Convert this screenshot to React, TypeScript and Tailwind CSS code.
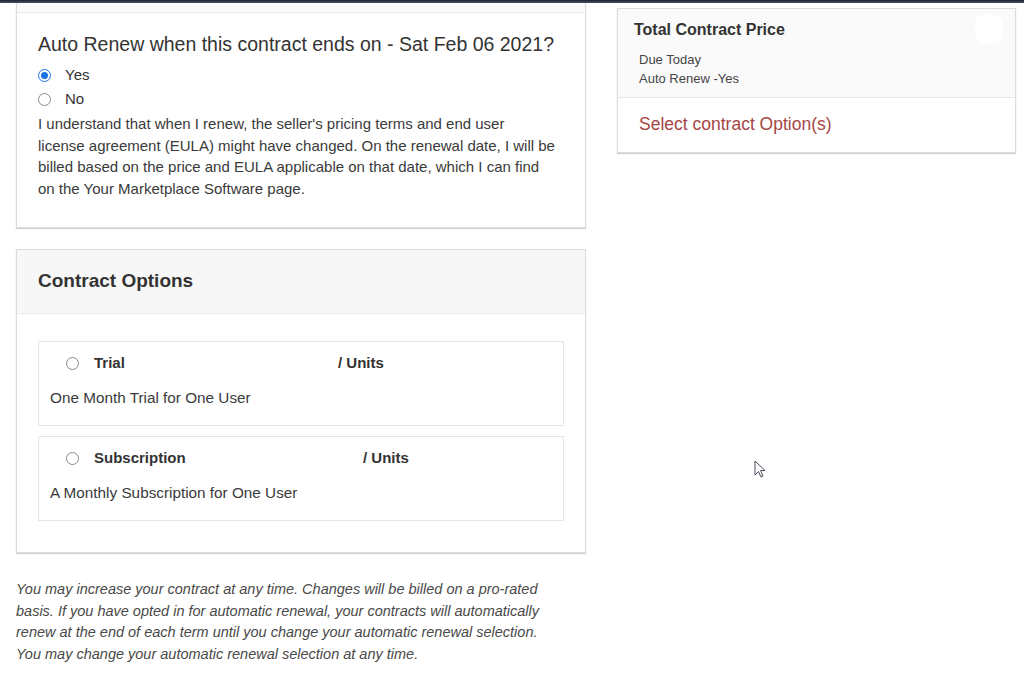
import React from "react";

const font = { fontFamily: '"Liberation Sans", Arial, sans-serif' };

const Radio: React.FC<{ checked?: boolean }> = ({ checked }) => (
  <span
    className={`inline-flex h-[13px] w-[13px] shrink-0 items-center justify-center rounded-full border ${
      checked ? "border-[#1a73e8]" : "border-[#8a8a8a] bg-white"
    }`}
  >
    {checked && <span className="h-[7px] w-[7px] rounded-full bg-[#1a73e8]" />}
  </span>
);

const options = [
  { title: "Trial", desc: "One Month Trial for One User", blank: "w-[29px]" },
  { title: "Subscription", desc: "A Monthly Subscription for One User", blank: "w-[54px]" },
];

export default function App() {
  return (
    <div className="relative h-[693px] w-[1024px] overflow-hidden bg-white text-[#333]" style={font}>
      <div className="h-[3px] bg-gradient-to-b from-[#1b2430] to-[#4a5260]" />

      <div className="flex">
        {/* left column */}
        <div className="ml-4 w-[570px]">
          <div className="border-x border-b border-[#dcdcdc] bg-white shadow-[0_1px_1px_rgba(0,0,0,0.18)]">
            <div className="h-[10px] border-b border-[#ececec] bg-[#fafafa]" />
            <div className="px-[21px] pt-[19px] pb-[28px]">
              <h2 className="text-[19.5px] leading-[24px] text-[#333]">
                Auto Renew when this contract ends on - Sat Feb 06 2021?
              </h2>
              <div className="mt-[7px] flex h-[24px] items-center gap-[14px] text-[15px]">
                <Radio checked />
                <span>Yes</span>
              </div>
              <div className="flex h-[24px] items-center gap-[14px] text-[15px]">
                <Radio />
                <span>No</span>
              </div>
              <p className="mt-[2px] whitespace-nowrap text-[15px] leading-[21.5px] text-[#3a3a3a]">
                I understand that when I renew, the seller's pricing terms and end user
                <br />
                license agreement (EULA) might have changed. On the renewal date, I will be
                <br />
                billed based on the price and EULA applicable on that date, which I can find
                <br />
                on the Your Marketplace Software page.
              </p>
            </div>
          </div>

          <div className="mt-[21px] border border-[#dcdcdc] bg-white shadow-[0_1px_1px_rgba(0,0,0,0.18)]">
            <div className="flex h-[64px] items-center border-b border-[#ececec] bg-[#f7f7f7] px-[21px]">
              <h3 className="text-[19px] font-bold text-[#333]">Contract Options</h3>
            </div>
            <div className="flex flex-col gap-[10px] px-[21px] pt-[27px] pb-[31px]">
              {options.map((o) => (
                <div key={o.title} className="border border-[#e6e6e6] pb-[17px] pl-[11px]">
                  <div className="mt-[11px] flex h-[20px] items-center pl-[16px] text-[15px] font-bold">
                    <Radio />
                    <span className="ml-[15px] w-[215px]">{o.title}</span>
                    <span className={`${o.blank} h-[20px] bg-white`} />
                    <span>/ Units</span>
                  </div>
                  <div className="mt-[15px] text-[15.3px] leading-[20px] text-[#3a3a3a]">{o.desc}</div>
                </div>
              ))}
            </div>
          </div>

          <p className="mt-[26px] w-[548px] text-[14.5px] italic leading-[21.7px] text-[#4a4a4a]">
            You may increase your contract at any time. Changes will be billed on a pro-rated basis. If
            you have opted in for automatic renewal, your contracts will automatically renew at the end
            of each term until you change your automatic renewal selection. You may change your automatic
            renewal selection at any time.
          </p>
        </div>

        {/* right column */}
        <div className="ml-[31px] mt-[5px] w-[399px] self-start border border-[#dcdcdc] bg-white shadow-[0_1px_1px_rgba(0,0,0,0.18)]">
          <div className="relative border-b border-[#e6e6e6] bg-[#fafafa] pl-[16px] pt-[11px] pb-[9px]">
            <div className="text-[16px] font-bold leading-[20px] text-[#333]">Total Contract Price</div>
            <div className="mt-[10px] pl-[5px] text-[13px] leading-[19px] text-[#444]">
              <div>Due Today</div>
              <div>Auto Renew -Yes</div>
            </div>
            <div className="absolute right-[12px] top-[5px] h-[30px] w-[28px] rounded-[10px] bg-white" />
          </div>
          <div className="pl-[21px] pt-[14px] pb-[16px] text-[17.5px] leading-[24px] text-[#a54646]">
            Select contract Option(s)
          </div>
        </div>
      </div>

      {/* mouse cursor */}
      <svg className="absolute left-[754px] top-[460px]" width="14" height="20" viewBox="0 0 14 20">
        <path
          d="M1 1 L1 15 L4.5 11.5 L7 17 L9 16 L6.5 10.5 L11 10.5 Z"
          fill="white"
          stroke="#4a4a5a"
          strokeWidth="1"
          strokeLinejoin="round"
        />
      </svg>
    </div>
  );
}
